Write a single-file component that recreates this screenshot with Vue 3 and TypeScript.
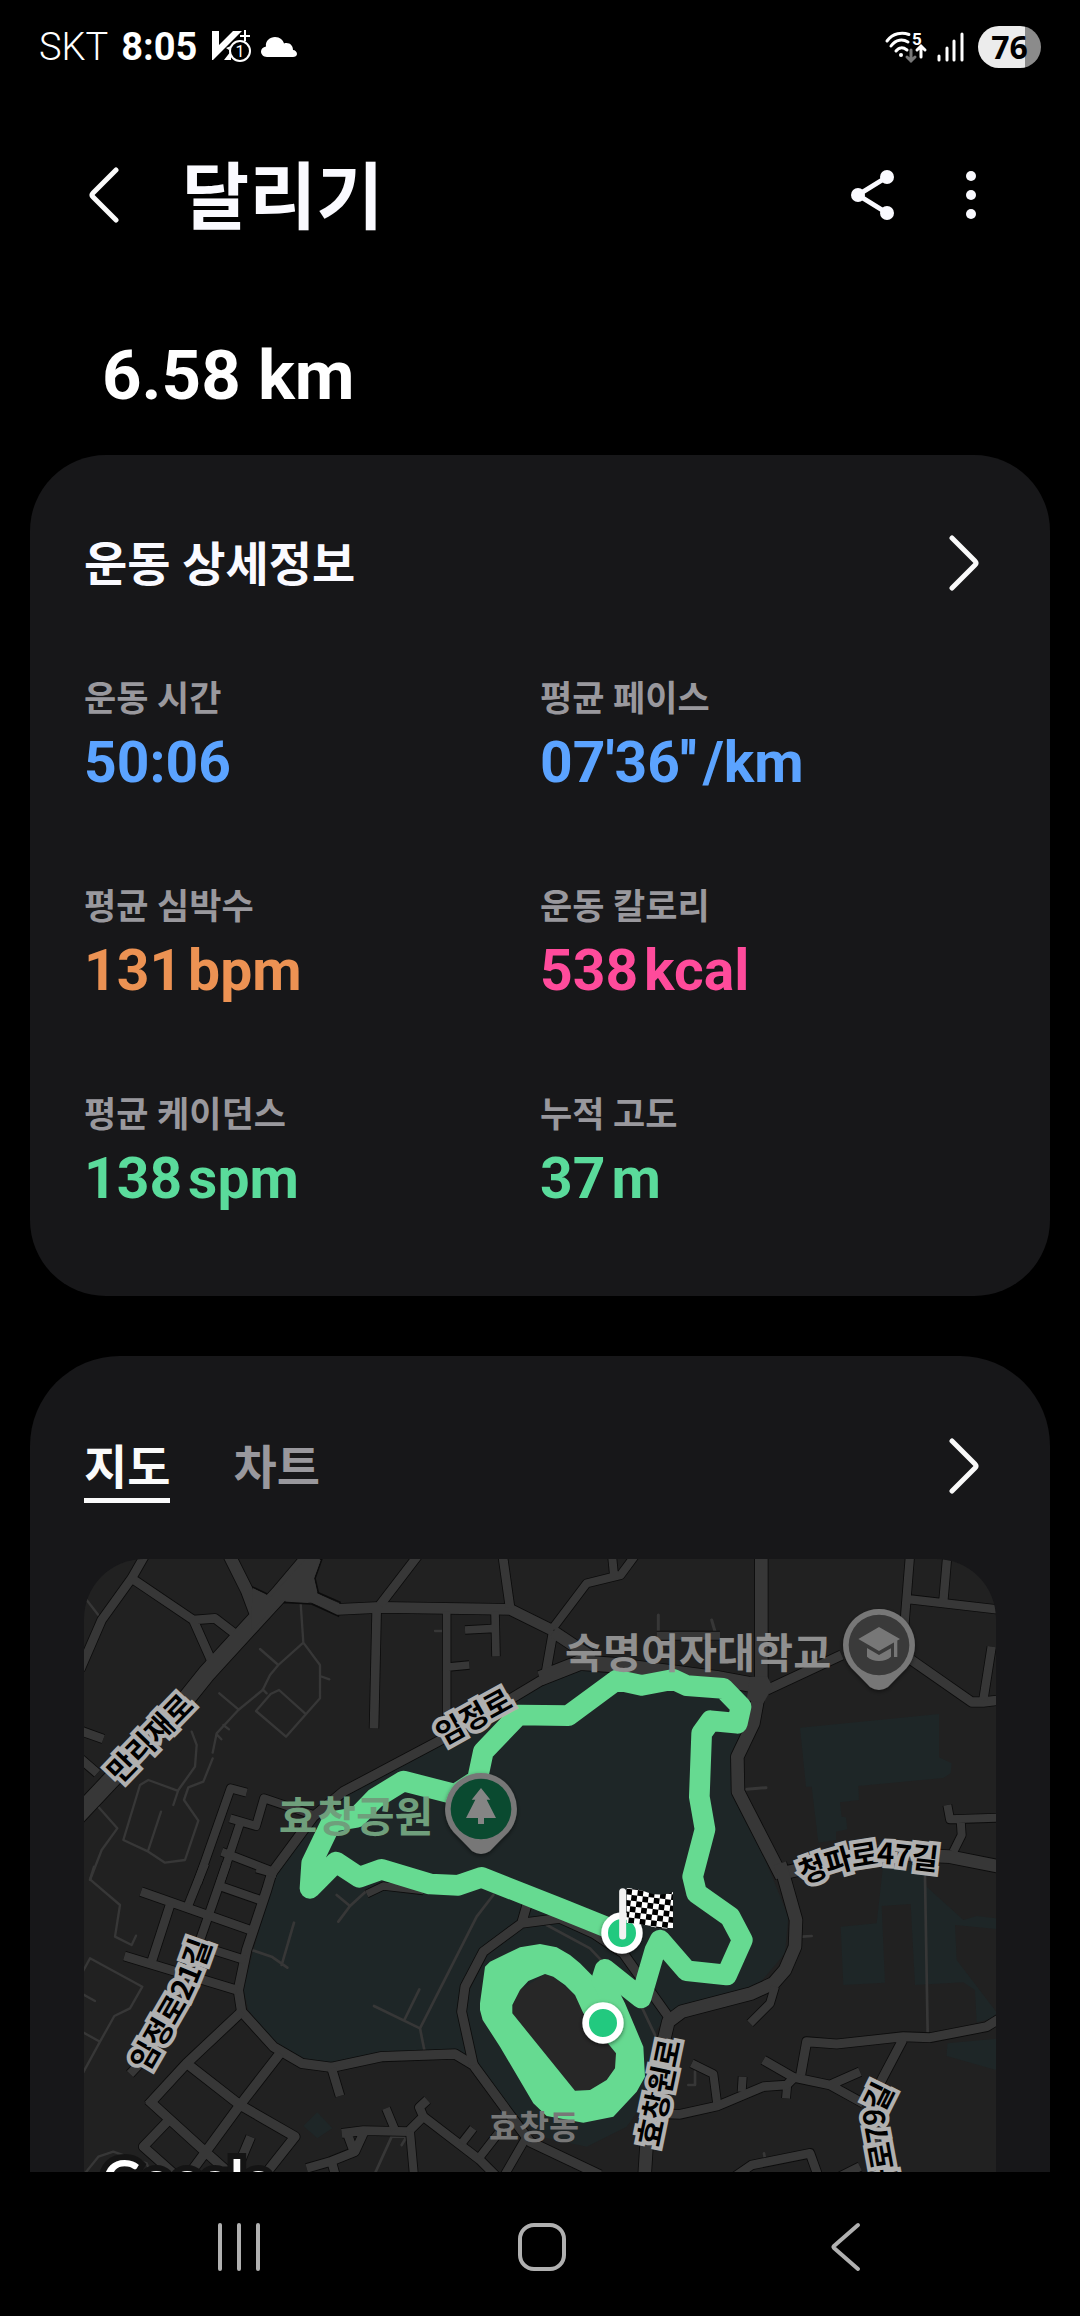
<script setup lang="ts">
import { ref } from 'vue'

interface Stat {
  label: string
  value: string
  unit: string
  tone: 'blue' | 'orange' | 'pink' | 'green'
}

const stats: Stat[] = [
  { label: '운동 시간', value: '50:06', unit: '', tone: 'blue' },
  { label: '평균 페이스', value: "07'36''", unit: '/km', tone: 'blue' },
  { label: '평균 심박수', value: '131', unit: 'bpm', tone: 'orange' },
  { label: '운동 칼로리', value: '538', unit: 'kcal', tone: 'pink' },
  { label: '평균 케이던스', value: '138', unit: 'spm', tone: 'green' },
  { label: '누적 고도', value: '37', unit: 'm', tone: 'green' },
]

const tabs = ['지도', '차트']
const activeTab = ref('지도')

// The map is stored as four tiles; each tile has its own origin.
type Tile = 'nw' | 'ne' | 'sw' | 'se'
const origin: Record<Tile, string> = {
  nw: 'translate(0 0)',
  ne: 'translate(1380 0)',
  sw: 'translate(0 960)',
  se: 'translate(1380 960)',
}

interface Road {
  tile: Tile
  w: number
  d: string
}

const roads: Road[] = [
  { tile: 'nw', w: 26, d: 'M195 15L155 85L65 210L0 360M155 85L340 210L400 345M340 210L405 205L470 255' },
  { tile: 'nw', w: 52, d: 'M710 0L600 130L380 370L300 470L-20 810' },
  { tile: 'nw', w: 36, d: 'M440 0L500 120L530 200' },
  { tile: 'nw', w: 32, d: 'M660 130L700 142L775 178L900 172L1290 178L1420 242' },
  { tile: 'nw', w: 26, d: 'M900 165L1015 15M1268 15L1290 172M890 180L882 535M1395 385L1420 242' },
  { tile: 'nw', w: 23, d: 'M1100 185V500M1245 185L1248 319M1155 240L1245 235M1105 351L1168 345' },
  { tile: 'nw', w: 28, d: 'M1500 335L1395 385L1120 550L790 725L700 800L575 970' },
  { tile: 'nw', w: 24, d: 'M500 728L452 715L352 1000M450 805L528 828L552 745L700 795M480 820L420 1000M425 905L580 965' },
  { tile: 'nw', w: 26, d: 'M0 542L70 567M0 625L52 670' },
  { tile: 'ne', w: 24, d: 'M216 15L222 75M290 10L242 75L140 100L38 235M350 257H540' },
  { tile: 'ne', w: 36, d: 'M40 245L160 325' },
  { tile: 'ne', w: 44, d: 'M0 385L120 338L220 345L530 385L640 405' },
  { tile: 'ne', w: 38, d: 'M664 15V410M660 410L640 520L592 620L594 725L725 980' },
  { tile: 'ne', w: 28, d: 'M680 420L905 315M1100 320L1295 456H1330L1380 450' },
  { tile: 'ne', w: 25, d: 'M1110 15L1092 240M1110 148L1380 179M1222 15L1210 155M1355 290L1330 450' },
  { tile: 'ne', w: 38, d: 'M725 970L1000 910L1230 920L1380 950' },
  { tile: 'ne', w: 24, d: 'M1240 905L1265 855L1262 810M1222 765L1230 808L1380 803' },
  { tile: 'sw', w: 28, d: 'M578 0L560 60L500 240L475 360L485 425L580 530L665 580L755 592L905 560L1125 552L1180 585L1290 735L1350 815L1560 915' },
  { tile: 'sw', w: 25, d: 'M375 -20L325 105M440 -20L360 210M425 50L540 90M530 -5L590 12M400 240L495 270' },
  { tile: 'sw', w: 26, d: 'M183 65L510 180M270 105L215 275M133 258L470 360M755 595L780 678M150 612L185 575' },
  { tile: 'sw', w: 28, d: 'M485 425L320 580L205 705M205 690L370 840L460 920M320 580L480 705L645 800L550 920M600 550L480 705L330 910' },
  { tile: 'sw', w: 27, d: 'M262 755L190 830L280 910M512 800L470 900' },
  { tile: 'sw', w: 26, d: 'M785 790L850 782L985 785L1030 740L1200 870L1260 930M1030 740L1018 712L1042 690M850 790L825 845L750 875L680 895M800 785L820 840M755 875L770 930' },
  { tile: 'sw', w: 24, d: 'M918 715L945 780M990 785L1003 930M1200 860L1255 790M1145 820L1180 775M1265 930L1340 800' },
  { tile: 'sw', w: 27, d: 'M1345 90L1325 160L1210 245L1155 350L1145 425L1180 585M1325 160L1440 145L1540 190L1630 250L1765 440' },
  { tile: 'sw', w: 22, d: 'M860 72L910 48L1030 62' },
  { tile: 'se', w: 38, d: 'M720 -20L768 150L765 230L735 300L700 340L635 370L425 425L385 455L360 560L325 740L313 930' },
  { tile: 'se', w: 24, d: 'M630 460L690 400L705 350M455 580L520 612L532 705M608 620L605 665M738 685L742 640' },
  { tile: 'se', w: 26, d: 'M380 732L420 733L532 708L670 650L740 645L765 620M670 570L760 622L870 645L970 700M870 645L960 605' },
  { tile: 'se', w: 27, d: 'M782 615L800 515L890 522L1090 500L1170 503L1340 470L1380 445M1088 510L1030 620L990 700L1020 930' },
  { tile: 'se', w: 26, d: 'M570 930L635 885L810 850L835 920M900 920L960 890' },
]

const paths: Road[] = [
  { tile: 'nw', w: 7, d: 'M20 150L55 195M662 160L670 278L595 345L570 375L548 420L475 480L410 550L398 608M540 297L595 345M670 278L720 345V445L618 560L528 483L572 432L597 420L675 490M720 378L748 388M418 430L475 478M548 418L560 430M430 525L447 538M412 555L424 568' },
  { tile: 'nw', w: 7, d: 'M398 625L370 695L325 712L312 750L355 812L315 930L255 938L205 905L130 870L180 705L205 690L292 722M243 785L205 900M335 545L350 585L345 650L295 720L280 765M50 765L112 835L65 900L30 990M1065 243H1088' },
  { tile: 'ne', w: 9, d: 'M355 195V250M515 210L528 255M620 718L678 713' },
  { tile: 'sw', w: 7, d: 'M42 -10L30 28L120 105L105 200L155 225L168 197M0 320L30 265L187 350L150 415L103 438L60 515L0 625M0 368L45 393M0 482L60 515M15 910L55 860L100 845L200 880L210 905' },
  { tile: 'sw', w: 8, d: 'M770 75L810 108L775 155M810 108L860 62M642 158L605 285M515 240L575 260L622 293M1240 75L1190 140L1020 475L1033 540M1018 358L973 450M882 408L1020 475M980 800H935L885 910M980 800L965 825' },
  { tile: 'se', w: 8, d: 'M20 165L150 235L230 320M300 400L345 495M1155 20L1163 490M787 200L815 198M465 605V645H445M672 850L675 868' },
]
</script>

<template>
  <div class="screen">
    <div class="status-bar">
      <span class="carrier">SKT</span>
      <span class="clock">8:05</span>
      <svg class="vaccine" width="42" height="34" viewBox="0 0 42 34" aria-hidden="true">
        <path d="M1 1h7v14L22 1h9L2 30H1z" fill="#fff" />
        <path d="M13 30l7-9v9z M15 18l5-2-2 4z" fill="#fff" />
        <path d="M34 0v11M29 6h10" stroke="#fff" stroke-width="2" />
        <circle cx="29" cy="21" r="10" fill="#000" stroke="#fff" stroke-width="2" />
        <text x="29" y="27" text-anchor="middle" font-size="16" fill="#fff">1</text>
      </svg>
      <svg class="cloud" width="36" height="22" viewBox="0 0 36 22" aria-hidden="true">
        <path d="M6 21C2 21 0 18 0 15.500S2 11 5 10.500C4 5 9 1 14 1C19 1 22 4 23 7.500C28 6 32 9 32 14C34 14 36 16 36 18S34 21 32 21z" fill="#fff" />
      </svg>
      <div class="status-right">
        <svg class="wifi" width="42" height="34" viewBox="0 0 42 34" aria-hidden="true">
          <g fill="none" stroke="#fff" stroke-width="3" stroke-linecap="round">
            <path d="M2 11C8 3 17 2 24 4.500" />
            <path d="M6 16C11 9 18 9 23 12" />
            <path d="M11 21C14 17 18 17 22 20" />
            <path d="M36 27V18M32 20l4-4 4 4" />
            <path d="M26 20v11M22 27l4 4 4-4" stroke="#777" />
          </g>
          <circle cx="16" cy="25" r="2" fill="#fff" />
          <text x="27" y="15" font-size="17" font-weight="700" fill="#fff">5</text>
        </svg>
        <svg width="27" height="32" viewBox="0 0 27 32" aria-hidden="true">
          <path d="M2 25v4M10 17v12M17 10v19M25 3v26" stroke="#fff" stroke-width="3" stroke-linecap="round" />
        </svg>
        <span class="battery">76</span>
      </div>
    </div>

    <header class="app-bar">
      <button class="icon-button" type="button" aria-label="뒤로">
        <svg width="30" height="56" viewBox="0 0 30 56"><path d="M27 3L4 26Q2 28 4 30L27 53" class="stroke" /></svg>
      </button>
      <h1>달리기</h1>
      <button class="icon-button" type="button" aria-label="공유">
        <svg width="44" height="50" viewBox="0 0 44 50">
          <path d="M36 7L7 25l29 18" fill="none" stroke="#fafaff" stroke-width="5" />
          <g fill="#fafaff"><circle cx="36" cy="7" r="7" /><circle cx="7" cy="25" r="7" /><circle cx="36" cy="43" r="7" /></g>
        </svg>
      </button>
      <button class="icon-button" type="button" aria-label="더보기">
        <svg width="10" height="48" viewBox="0 0 10 48" fill="#fafaff">
          <circle cx="5" cy="5" r="5" /><circle cx="5" cy="24" r="5" /><circle cx="5" cy="43" r="5" />
        </svg>
      </button>
    </header>

    <main>
      <p class="distance">6.58 km</p>

      <section class="card details">
        <div class="details-head">
          <h2>운동 상세정보</h2>
          <button class="icon-button" type="button" aria-label="운동 상세정보 보기">
            <svg width="30" height="56" viewBox="0 0 30 56"><path d="M3 3L26 26Q28 28 26 30L3 53" class="stroke" /></svg>
          </button>
        </div>
        <dl class="stats">
          <div v-for="stat in stats" :key="stat.label">
            <dt>{{ stat.label }}</dt>
            <dd :class="stat.tone"><span>{{ stat.value }}</span><span v-if="stat.unit">{{ stat.unit }}</span></dd>
          </div>
        </dl>
      </section>

      <section class="card route">
        <div class="route-head">
          <div class="tabs" role="tablist">
            <button
              v-for="tab in tabs"
              :key="tab"
              type="button"
              role="tab"
              class="tab"
              :class="{ active: tab === activeTab }"
              :aria-selected="tab === activeTab"
              @click="activeTab = tab"
            >{{ tab }}</button>
          </div>
          <button class="icon-button" type="button" aria-label="지도 보기">
            <svg width="30" height="56" viewBox="0 0 30 56"><path d="M3 3L26 26Q28 28 26 30L3 53" class="stroke" /></svg>
          </button>
        </div>

        <svg class="map" viewBox="12 27 2736 2100" role="img" aria-label="달리기 경로 지도">
          <defs>
            <pattern id="checks" width="34" height="34" patternUnits="userSpaceOnUse" patternTransform="translate(260 56) rotate(7)">
              <rect width="34" height="34" fill="#fff" />
              <path d="M0 0h17v17H0zM17 17h17v17H17z" fill="#000" />
            </pattern>
            <filter id="pin-shadow" x="-30%" y="-30%" width="160%" height="160%">
              <feDropShadow dx="0" dy="5" stdDeviation="7" flood-color="#000" flood-opacity="0.5" />
            </filter>
            <path id="street-manrijae" d="M93 676L331 430" />
            <path id="street-imjeong" d="M1072 553L1294 430" />
            <path id="street-imjeong21" d="M169 1549L276 1364Q317 1294 367 1144" />
            <path id="street-hyochangwon" d="M1698 1785L1768 1447" />
            <path id="street-cheongpa47" d="M2158 966Q2330 898 2420 904L2590 924" />
            <path id="street-cheongpa79" d="M2418 1938L2380 1730Q2370 1690 2385 1650L2430 1560" />
          </defs>

          <rect x="12" y="27" width="2736" height="2100" fill="#212121" />

          <g fill="#1e2627">
            <path d="M1440 385L1500 345L1880 370L2020 440L1980 560L1955 640L1960 720L2060 940L2125 1100L2115 1210L2030 1310L1800 1370L1760 1400L1730 1440L1690 1660L1640 1730L1520 1790L1380 1760L1290 1680L1180 1550L1120 1510L905 1520L755 1545L665 1535L580 1480L505 1380L490 1320L520 1200L590 960L690 830L800 735L1120 560L1400 400Z" />
            <path :transform="origin.ne" d="M780 533L1197 492V622L1235 640L1232 670L1210 684L955 708L957 750L900 757L905 800L918 802L922 838L888 845V870L835 878L815 710H798Z" />
            <path :transform="origin.se" d="M1030 -20H1150L1160 50L1270 150L1310 138L1380 146V178L1245 165L1250 270L1380 440L1310 457L1305 360L1270 337L1125 345L1112 102L1025 108L1035 338L910 345L902 170L1010 160ZM1222 520L1380 505V603L1220 558Z" />
            <path :transform="origin.sw" d="M712 727L757 775L712 805L670 768Z" />
          </g>

          <g fill="none" stroke="#373737" stroke-linecap="round" stroke-linejoin="round">
            <path v-for="path in paths" :key="path.d" :d="path.d" :stroke-width="path.w" :transform="origin[path.tile]" />
          </g>
          <path d="M670 20H728L705 85L715 128L780 157L775 198L695 162L610 157L510 250V190L515 110L572 137Z" fill="#373737" stroke="#0c0c0c" stroke-width="5" />
          <g fill="none" stroke="#0c0c0c" stroke-linejoin="round">
            <path v-for="road in roads" :key="road.d" :d="road.d" :stroke-width="road.w + 5" :transform="origin[road.tile]" />
          </g>
          <g fill="none" stroke="#373737" stroke-linejoin="round">
            <path v-for="road in roads" :key="road.d" :d="road.d" :stroke-width="road.w" :transform="origin[road.tile]" />
          </g>
          <path d="M675 30H722L702 85L712 131L778 160L775 190L695 158L610 152L515 240V190L518 114L572 140Z" fill="#373737" />
          <path d="M2010 380H2062L2078 410L2050 460L2000 450Z" fill="#373737" />

          <g :transform="origin.se">
            <path d="M15 312L40 320L105 375L130 430L228 550V590L200 630L150 660L105 662L-83 430V410L-60 360Z" fill="#272727" />
            <path fill="#66da91" fill-rule="evenodd" d="M-165 290L-150 275L-60 232L0 222L50 232L90 255L120 280L160 320L240 370L255 400L310 530L315 620L290 665L220 740L130 758L20 738L-20 700L-120 530L-172 450L-180 420V400ZM15 312L-35 333L-60 360L-83 405V430L105 662L150 660L200 630L225 595L228 550L130 430L105 375L75 345L40 320Z" />
          </g>
          <path
            d="M1626 1150L1440 1075L1205 982L1135 1006L1050 1002L905 958L838 982L768 936L690 1015L695 940L755 815L830 802L885 745L970 693L1125 733L1192 690L1210 605L1315 495L1465 497L1610 390L1685 406L1780 388L1820 407L1930 415L1983 470L1972 520L1892 512L1865 550L1858 740L1875 838L1838 980L1850 1030L1950 1100L1987 1170L1940 1275L1820 1262L1740 1170L1725 1200L1683 1344L1575 1258L1565 1290L1590 1340"
            fill="none" stroke="#66da91" stroke-width="62" stroke-linecap="round" stroke-linejoin="round"
          />

          <g :transform="origin.se">
            <g stroke="#fff" stroke-width="20" fill="#22c97f" filter="url(#pin-shadow)">
              <circle cx="246" cy="189" r="52" />
              <circle cx="189" cy="459" r="52" />
            </g>
            <path d="M260 54Q290 56 325 68T399 66V174Q365 178 325 168T260 160Z" fill="url(#checks)" />
            <path d="M248 65V198" stroke="#f2f2f2" stroke-width="21" stroke-linecap="round" />
          </g>

          <g class="street">
            <text><textPath href="#street-manrijae">만리재로</textPath></text>
            <text><textPath href="#street-imjeong">임정로</textPath></text>
            <text><textPath href="#street-imjeong21">임정로21길</textPath></text>
            <text><textPath href="#street-hyochangwon">효창원로</textPath></text>
            <text><textPath href="#street-cheongpa47">청파로47길</textPath></text>
            <text><textPath href="#street-cheongpa79">파로79길</textPath></text>
          </g>

          <g class="place">
            <text x="596" y="847" font-size="126" fill="#6f9f7c">효창공원</text>
            <text x="1455" y="355" font-size="124" fill="#8f8f8f">숙명여자대학교</text>
            <text x="1227" y="1768" font-size="98" fill="#777">효창동</text>
          </g>

          <g filter="url(#pin-shadow)" fill="#777">
            <path d="M1203 669a108 108 0 0 1 82 178Q1260 872 1230 903Q1203 921 1176 903Q1146 872 1121 847A108 108 0 0 1 1203 669Z" />
            <path d="M2397 177a108 108 0 0 1 82 178Q2454 380 2424 411Q2397 429 2370 411Q2340 380 2315 355A108 108 0 0 1 2397 177Z" />
          </g>
          <circle cx="1203" cy="777" r="91" fill="#0a4a30" />
          <path d="M1203 714L1231 749H1220L1248 804H1212V822H1194V804H1158L1186 749H1175Z" fill="#858585" />
          <circle cx="2397" cy="285" r="91" fill="#3a3a3a" />
          <path d="M2397 231L2460 267L2397 303L2335 267ZM2361 294L2397 315L2433 295V320Q2418 333 2397 333T2361 320ZM2442 270H2452V321H2442Z" fill="#777" />

          <text class="provider" x="68" y="1948">Google</text>
        </svg>
      </section>
    </main>

    <nav class="system-nav" aria-label="시스템 탐색">
      <button type="button" aria-label="최근 앱">
        <svg width="44" height="50" viewBox="0 0 44 50"><path d="M3 3v44M22 3v44M41 3v44" class="nav-stroke" /></svg>
      </button>
      <button type="button" aria-label="홈">
        <svg width="50" height="50" viewBox="0 0 50 50"><rect x="3" y="3" width="44" height="44" rx="14" class="nav-stroke" /></svg>
      </button>
      <button type="button" aria-label="뒤로 가기">
        <svg width="32" height="50" viewBox="0 0 32 50"><path d="M29 3L5 24Q4 25 5 26L29 47" class="nav-stroke" /></svg>
      </button>
    </nav>
  </div>
</template>

<style>
body {
  background: #000;
}
</style>

<style scoped>
.screen {
  display: flex;
  flex-direction: column;
  height: 100vh;
  overflow: hidden;
  background: #000;
  color: #fafaff;
  font-family: Roboto, 'Noto Sans CJK KR', sans-serif;
}

h1, h2, p, dl, dd {
  margin: 0;
}

button {
  padding: 0;
  border: 0;
  background: none;
  color: inherit;
  font: inherit;
}

svg {
  display: block;
  flex: none;
}

.stroke {
  fill: none;
  stroke: #fafafa;
  stroke-width: 5;
  stroke-linecap: round;
}

.status-bar {
  flex: none;
  display: flex;
  align-items: center;
  height: 94px;
  padding: 0 39px 0 39px;
  color: #fff;
  font-size: 38px;
  line-height: 48px;
}

.carrier {
  font-weight: 300;
}

.clock {
  margin-left: 13px;
  font-weight: 700;
}

.vaccine {
  margin-left: 14px;
}

.cloud {
  margin-left: 8px;
}

.wifi {
  overflow: visible;
}

.status-right {
  display: flex;
  align-items: center;
  gap: 10px;
  margin-left: auto;
}

.battery {
  width: 63px;
  height: 42px;
  margin-left: 4px;
  border-radius: 21px;
  background: linear-gradient(90deg, #ececec 75%, #8b8b8b 75%);
  color: #000;
  font: 700 32px/42px 'Open Sans', sans-serif;
  text-align: center;
}

.app-bar {
  flex: none;
  display: flex;
  align-items: center;
  gap: 34px;
  height: 202px;
  padding: 0 77px 0 72px;
}

.app-bar h1 {
  flex: 1;
  margin-left: 12px;
  padding-top: 6px;
  font-size: 73px;
  line-height: 96px;
  font-weight: 700;
}

.icon-button {
  display: flex;
  flex: none;
  align-items: center;
  justify-content: center;
  width: 64px;
  height: 64px;
}

main {
  flex: 1;
  min-height: 0;
  padding: 0 30px;
  overflow: hidden auto;
  scrollbar-width: none;
}

.distance {
  padding-left: 72px;
  color: #fff;
  font-size: 69px;
  line-height: 159px;
  font-weight: 700;
}

.card {
  padding: 0 54px;
  background: #171719;
}

.details {
  padding-bottom: 83px;
  border-radius: 76px;
}

.details-head {
  display: flex;
  align-items: center;
  justify-content: space-between;
  height: 216px;
}

h2 {
  padding-top: 4px;
  font-size: 47px;
  line-height: 64px;
  font-weight: 700;
}

.stats {
  display: grid;
  grid-template-columns: 1fr 1fr;
  row-gap: 82px;
}

dt {
  color: #99989d;
  font-size: 35px;
  line-height: 58px;
  font-weight: 700;
}

dd {
  display: flex;
  gap: 6px;
  font-size: 57px;
  line-height: 68px;
  font-weight: 700;
}

.blue { color: #5ba3ff; }
.orange { color: #ec9253; }
.pink { color: #ff4b9b; }
.green { color: #5adb9b; }

.route {
  margin-top: 60px;
  border-radius: 90px 90px 0 0;
}

.route-head {
  display: flex;
  align-items: flex-start;
  justify-content: space-between;
  padding: 78px 0 56px;
}

.tabs {
  display: flex;
  gap: 63px;
}

.tab {
  padding-top: 4px;
  border-bottom: 5px solid transparent;
  color: #99989d;
  font-size: 47px;
  line-height: 60px;
  font-weight: 700;
}

.tab.active {
  border-color: #fafafa;
  color: #fafafa;
}

.map {
  width: 100%;
  height: auto;
  border-radius: 60px;
}

.street text {
  fill: #000;
  stroke: #b0b0b0;
  stroke-width: 24;
  stroke-linejoin: miter;
  paint-order: stroke;
  dominant-baseline: central;
  font: 700 88px 'Noto Sans CJK KR', sans-serif;
}

.place text {
  font-family: 'Noto Sans CJK KR', sans-serif;
  font-weight: 700;
}

.provider {
  fill: #fff;
  stroke: #141414;
  stroke-width: 36;
  paint-order: stroke;
  font: 700 160px Lato, sans-serif;
}

.system-nav {
  flex: none;
  display: grid;
  grid-template-columns: repeat(3, 1fr);
  height: 144px;
  padding: 6px 84px 0 88px;
  box-sizing: border-box;
  background: #000;
}

.system-nav button {
  display: flex;
  align-items: center;
  justify-content: center;
}

.nav-stroke {
  fill: none;
  stroke: #b0b0b0;
  stroke-width: 4;
  stroke-linecap: round;
}
</style>
